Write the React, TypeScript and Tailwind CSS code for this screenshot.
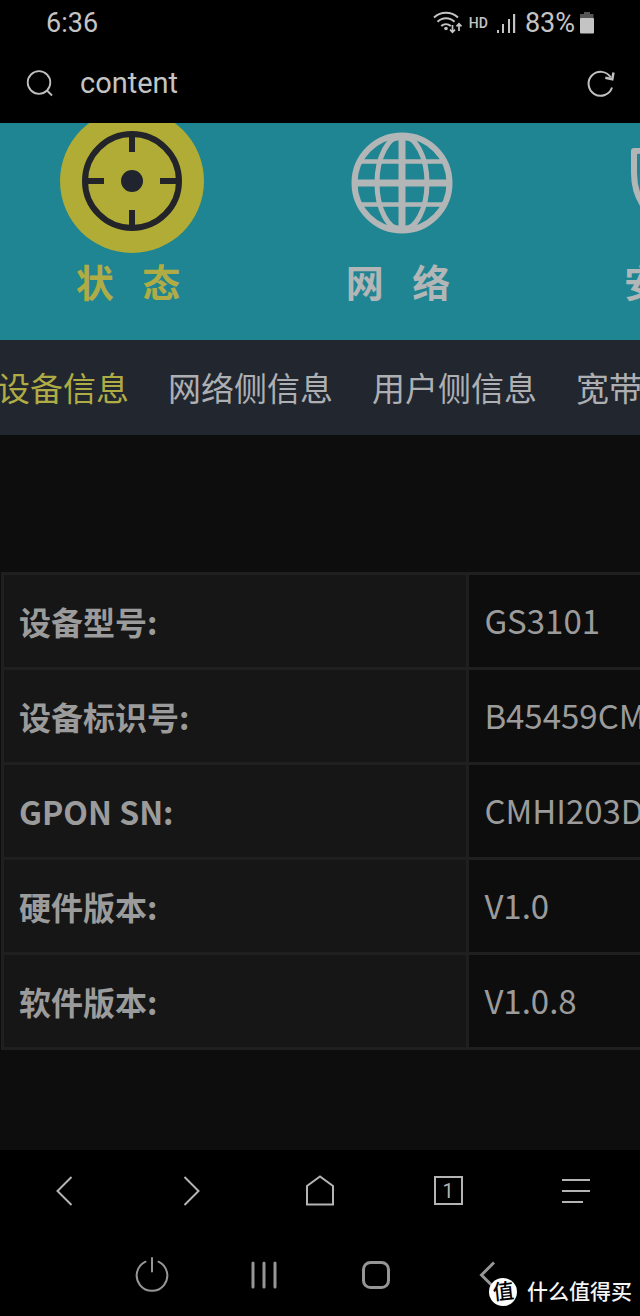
import type { ReactNode } from 'react';

const deviceInfo = [
  { label: '设备型号:', value: 'GS3101' },
  { label: '设备标识号:', value: 'B45459CM' },
  { label: 'GPON SN:', value: 'CMHI203D' },
  { label: '硬件版本:', value: 'V1.0' },
  { label: '软件版本:', value: 'V1.0.8' },
];

const tabs = ['设备信息', '网络侧信息', '用户侧信息', '宽带'];

// --- Phone status bar ---
function StatusBar() {
  return (
    <div className="flex h-[46px] items-center justify-between pr-[45px] pl-[46px] text-[27px] text-[#c4c4c4]">
      <span>6:36</span>
      <div className="flex items-center">
        <svg width="30" height="24" viewBox="0 0 30 24" fill="none" stroke="#c4c4c4" strokeWidth="2">
          <path d="M1 6.5C8 .2 18 .2 25 6.5M4.5 10.8C9.5 6 16.5 6 21.5 10.8M8.2 15C11 12.5 15 12.5 17.8 15" />
          <circle cx="13" cy="17.5" r="1.8" fill="#c4c4c4" stroke="none" />
          <path d="M19.5 14v7M17 18.7l2.5 2.5 2.5-2.5M26 20v-7M23.5 15.3l2.5-2.5 2.5 2.5" strokeWidth="1.7" />
        </svg>
        <span className="ml-1.5 text-[14px] font-medium">HD</span>
        <svg className="ml-2" width="21" height="22" viewBox="0 0 21 22" fill="#c4c4c4">
          <rect x="1" y="18" width="2" height="3" />
          <rect x="6" y="12" width="2" height="9" />
          <rect x="12" y="7" width="2" height="14" />
          <rect x="17" y="2" width="2.2" height="19" />
        </svg>
        <span className="ml-2">83%</span>
        <svg className="ml-1" width="16" height="22" viewBox="0 0 16 22">
          <path d="M5 0h6v2h3.500v5H1V2h4z" fill="#555" />
          <rect x="1" y="6" width="14" height="15.5" rx="1" fill="#c4c4c4" />
        </svg>
      </div>
    </div>
  );
}

function AddressBar() {
  return (
    <div className="flex h-[77px] items-center pr-[24px] pb-0.5 pl-[26px]">
      <svg width="28" height="28" viewBox="0 0 28 28" fill="none" stroke="#c0c0c0" strokeWidth="1.8">
        <circle cx="13" cy="12.500" r="11.300" />
        <path d="M21 20.500l5 5" />
      </svg>
      <input
        type="text"
        aria-label="地址"
        defaultValue="content"
        className="ml-[26px] min-w-0 flex-1 bg-transparent text-[29px] text-[#c4c4c4] outline-none"
      />
      <button type="button" aria-label="刷新">
        <svg width="30" height="28" viewBox="0 0 30 28" fill="none" stroke="#c0c0c0" strokeWidth="2">
          <path d="M26 17.500A12 12 0 1 1 24.800 7.500" />
          <path d="M27.500 2.500l-1.200 6.800-7-1.500" strokeWidth="2.500" />
        </svg>
      </button>
    </div>
  );
}

// --- Main menu ---
function TargetIcon() {
  return (
    <svg width="144" height="130" viewBox="0 0 144 130">
      <circle cx="72" cy="58" r="72" fill="#b0ac35" />
      <g fill="none" stroke="#23242a" strokeWidth="6">
        <circle cx="72" cy="58" r="47" />
        <path d="M72 12v17M72 87v17M26 58h18M100 58h18" />
      </g>
      <circle cx="72" cy="58" r="11" fill="#20242e" />
    </svg>
  );
}

function GlobeIcon() {
  return (
    <svg width="144" height="130" viewBox="0 0 144 130" fill="none" stroke="#b3b6b7" strokeWidth="6">
      <circle cx="72" cy="60" r="47.500" />
      <path d="M72 12v96M24 60h96" strokeWidth="7" />
      <ellipse cx="72" cy="60" rx="25" ry="47" strokeWidth="5" />
      <path d="M32 38.500h80M32 81.500h80" strokeWidth="4.500" />
      <path d="M60 16.500c7-3 17-3 24 0M60 103.500c7 3 17 3 24 0" />
    </svg>
  );
}

function ShieldIcon() {
  return (
    <svg width="96" height="130" viewBox="0 0 96 130" fill="none" stroke="#b3b6b7" strokeWidth="6">
      <path d="M10 28c14 0 27-4 37-14 10 10 23 14 37 14v22c0 26-14 44-37 56C24 94 10 76 10 50z" strokeLinejoin="round" />
    </svg>
  );
}

function MainMenu() {
  return (
    <nav className="-ml-[3px] flex h-[217px] bg-[#1f8593] text-[38px] leading-10 font-bold text-[#b3b6b7]">
      <a href="#status" className="flex w-[270px] shrink-0 flex-col items-center text-[#b0ac45]">
        <TargetIcon />
        <span className="mt-2 mr-2">
          <span className="mr-5">状</span> 态
        </span>
      </a>
      <a href="#network" className="flex w-[270px] shrink-0 flex-col items-center">
        <GlobeIcon />
        <span className="mt-2 mr-2">
          <span className="mr-5">网</span> 络
        </span>
      </a>
      <a href="#security" className="flex shrink-0 flex-col pl-[87px]">
        <ShieldIcon />
        <span className="mt-2">安</span>
      </a>
    </nav>
  );
}

function SubMenu() {
  return (
    <nav className="-ml-[3px] flex h-[95px] items-center gap-[39px] bg-[#22262e] text-[33px] whitespace-nowrap text-[#adafb3]">
      {tabs.map((tab, i) => (
        <a key={tab} href={`#tab-${i}`} className={i === 0 ? 'text-[#b0ac45]' : ''}>
          {tab}
        </a>
      ))}
    </nav>
  );
}

function DeviceTable() {
  return (
    <table className="mt-[137px] ml-px w-[109%] table-fixed border-collapse text-left text-[33px] text-[#9b9b9b]">
      <tbody>
        {deviceInfo.map((row) => (
          <tr key={row.label} className="h-[95px]">
            <th scope="row" className="w-[67%] border-3 border-[#1f1f1f] bg-[#161616] px-[15px] text-[32px] font-bold">
              {row.label}
            </th>
            <td className="border-3 border-[#1f1f1f] px-[15px]">{row.value}</td>
          </tr>
        ))}
      </tbody>
    </table>
  );
}

// --- Bottom bars ---
function BarButton({ label, children }: { label: string; children: ReactNode }) {
  return (
    <button type="button" aria-label={label} className="flex h-full items-center justify-center">
      {children}
    </button>
  );
}

function BrowserBar() {
  return (
    <div className="grid h-[81px] grid-cols-5 text-[#b4b4b4]">
      <BarButton label="后退">
        <svg width="32" height="32" viewBox="0 0 32 32" fill="none" stroke="currentColor" strokeWidth="2">
          <path d="M23.500 2L9.500 16l14 14" />
        </svg>
      </BarButton>
      <BarButton label="前进">
        <svg width="32" height="32" viewBox="0 0 32 32" fill="none" stroke="currentColor" strokeWidth="2">
          <path d="M8.500 2l14 14-14 14" />
        </svg>
      </BarButton>
      <BarButton label="主页">
        <svg width="32" height="32" viewBox="0 0 32 32" fill="none" stroke="currentColor" strokeWidth="2">
          <path d="M3 29.500V11L16 1.500 29 11v18.500z" />
        </svg>
      </BarButton>
      <button type="button" className="flex h-full items-center justify-center">
        <span className="flex size-[29px] items-center justify-center border-2 border-[#b4b4b4] text-[20px]">1</span>
      </button>
      <BarButton label="菜单">
        <svg width="30" height="32" viewBox="0 0 30 32" fill="none" stroke="currentColor" strokeWidth="2">
          <path d="M1 5h28M1 16h28M1 27h21" />
        </svg>
      </BarButton>
    </div>
  );
}

function SystemBar() {
  return (
    <div className="flex h-[85px] justify-center text-[#969696]">
      <div className="grid w-[448px] grid-cols-4 pt-0.5">
        <BarButton label="电源">
          <svg width="36" height="36" viewBox="0 0 36 36" fill="none" stroke="currentColor" strokeWidth="2">
            <path d="M11.500 4.700a15.300 15.300 0 1 0 13 0M18 1v13.500" strokeLinecap="round" />
          </svg>
        </BarButton>
        <BarButton label="最近">
          <svg width="28" height="28" viewBox="0 0 28 28" fill="none" stroke="currentColor" strokeWidth="3">
            <path d="M3 2v24M14 2v24M25 2v24" strokeLinecap="round" />
          </svg>
        </BarButton>
        <BarButton label="桌面">
          <svg width="30" height="30" viewBox="0 0 30 30" fill="none" stroke="currentColor" strokeWidth="3">
            <rect x="2.500" y="2.500" width="25" height="25" rx="7" />
          </svg>
        </BarButton>
        <BarButton label="返回">
          <svg width="30" height="30" viewBox="0 0 30 30" fill="none" stroke="currentColor" strokeWidth="3">
            <path d="M21 2.500L8.500 15 21 27.500" />
          </svg>
        </BarButton>
      </div>
    </div>
  );
}

function Watermark() {
  return (
    <div className="absolute right-2 bottom-2.5 flex items-center gap-2.5 text-[21px] leading-7 font-medium text-[#f4f4f4]">
      <span className="flex size-7 items-center justify-center rounded-full bg-white text-black">
        <span className="-rotate-6">值</span>
      </span>
      什么值得买
    </div>
  );
}

export default function App() {
  return (
    <div className="relative flex min-h-screen flex-col overflow-hidden bg-black font-[Roboto,'Noto_Sans_CJK_SC',sans-serif]">
      <header>
        <StatusBar />
        <AddressBar />
      </header>
      <main className="flex-1 bg-[#0d0d0d] font-['Noto_Sans_CJK_SC',sans-serif]">
        <MainMenu />
        <SubMenu />
        <DeviceTable />
      </main>
      <footer>
        <BrowserBar />
        <SystemBar />
      </footer>
      <Watermark />
    </div>
  );
}
